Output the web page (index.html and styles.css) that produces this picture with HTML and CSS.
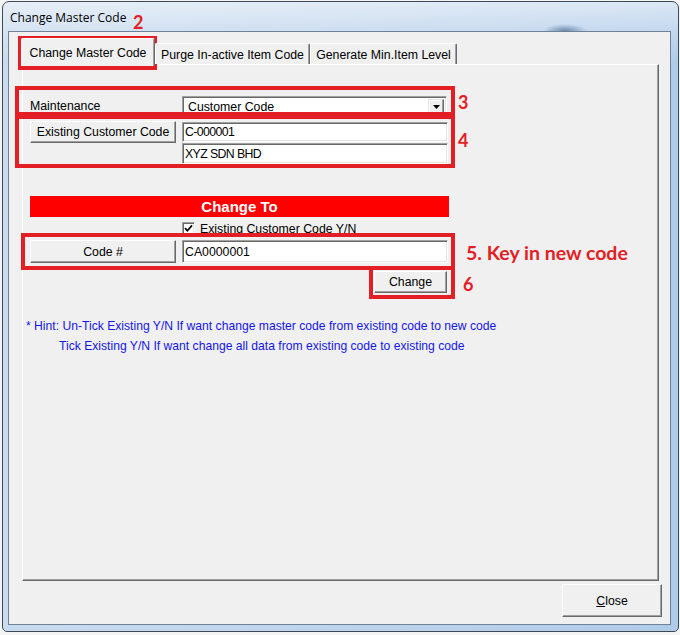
FILE: index.html
```html
<!DOCTYPE html>
<html>
<head>
<meta charset="utf-8">
<title>Change Master Code</title>
<link rel="stylesheet" href="styles.css">
</head>
<body>
<div class="window">
  <div class="titlebar"><span class="title">Change Master Code</span></div>
  <div class="client">
    <div class="tabs">
      <div class="tab tab-active">Change Master Code</div>
      <div class="tab tab-purge">Purge In-active Item Code</div>
      <div class="tab tab-gen">Generate Min.Item Level</div>
    </div>
    <div class="panel">
      <div class="form">
        <div class="lbl">Maintenance</div>
        <div class="combo">
          <span class="combo-text">Customer Code</span>
          <span class="drop"><svg width="7" height="4" viewBox="0 0 7 4"><path d="M0 0H7L3.5 4Z" fill="#000"/></svg></span>
        </div>
        <button class="btn btn-existing">Existing Customer Code</button>
        <div class="field narrow field-code">C-000001</div>
        <div class="field narrow field-name">XYZ SDN BHD</div>
      </div>
      <div class="bar">Change To</div>
      <div class="checkrow">
        <span class="check"><svg width="9" height="9" viewBox="0 0 9 9"><path d="M1 4.2L3.4 6.8L8 1.4" fill="none" stroke="#000" stroke-width="1.7"/></svg></span>
        <span class="check-label">Existing Customer Code Y/N</span>
      </div>
      <div class="coderow">
        <button class="btn btn-code">Code #</button>
        <div class="field field-new">CA0000001</div>
      </div>
      <div class="changerow"><button class="btn btn-change">Change</button></div>
      <div class="hint">
        <div class="hint-1">* Hint: Un-Tick Existing Y/N If want change master code from existing code to new code</div>
        <div class="hint-2">Tick Existing Y/N If want change all data from existing code to existing code</div>
      </div>
    </div>
    <div class="footer"><button class="btn btn-close"><u>C</u>lose</button></div>
  </div>
</div>
<div class="annot">
  <div class="rbox rbox-2"></div>
  <div class="rbox rbox-3"></div>
  <div class="rbox rbox-4"></div>
  <div class="rbox rbox-5"></div>
  <div class="rbox rbox-6"></div>
  <div class="rlabel rl-2">2</div>
  <div class="rlabel rl-3">3</div>
  <div class="rlabel rl-4">4</div>
  <div class="rlabel rl-5">5. Key in new code</div>
  <div class="rlabel rl-6">6</div>
</div>
</body>
</html>
```
FILE: styles.css
```css
html, body {
  margin: 0;
  padding: 0;
}
body {
  width: 680px;
  height: 635px;
  overflow: hidden;
  position: relative;
  background: #f4f4f4;
  font-family: "Liberation Sans", Arial, sans-serif;
  font-size: 12.3px;
  color: #000;
}
.window {
  box-sizing: border-box;
  margin: 1px 0 0 2px;
  width: 677px;
  height: 631px;
  border: 1px solid #3f4a57;
  border-radius: 7px 7px 5px 5px;
  padding: 0 7px 6px 5px;
  display: flex;
  flex-direction: column;
  background:
    radial-gradient(ellipse 22px 7px at 562px 29px, rgba(30, 70, 115, 0.55), rgba(30, 70, 115, 0)),
    linear-gradient(to bottom, rgba(255, 255, 255, 0.55) 0, rgba(255, 255, 255, 0.25) 28px, rgba(255, 255, 255, 0) 60px),
    linear-gradient(to right, #c9dbef 0%, #bcd3ec 60%, #b0cbe9 100%);
}
.titlebar {
  height: 29px;
  display: flex;
  align-items: center;
  padding-left: 2px;
  padding-top: 2px;
  box-sizing: border-box;
}
.title {
  font-family: "Open Sans", "Noto Sans", sans-serif;
  font-size: 12px;
  color: #000;
}
.client {
  box-sizing: border-box;
  height: 594px;
  border: 1px solid #6f8196;
  background: #f0f0f0;
  display: flex;
  flex-direction: column;
}
.tabs {
  display: flex;
  align-items: flex-end;
  height: 26px;
  margin-top: 6px;
  padding-left: 12px;
  position: relative;
  z-index: 1;
}
.tab {
  box-sizing: border-box;
  height: 21px;
  display: flex;
  align-items: center;
  justify-content: center;
  padding-top: 1px;
  border-top: 1px solid #fff;
  border-left: 1px solid #fff;
  border-right: 1px solid #696969;
  box-shadow: inset -1px 0 0 #a0a0a0;
  border-radius: 2px 2px 0 0;
  background: #f0f0f0;
  white-space: nowrap;
}
.tab-active {
  width: 134px;
  height: 28px;
  margin-bottom: -2px;
  padding-top: 0;
}
.tab-purge {
  width: 155px;
}
.tab-gen {
  width: 147px;
}
.panel {
  box-sizing: border-box;
  margin-left: 13px;
  width: 637px;
  height: 517px;
  border: 1px solid;
  border-color: #fff #696969 #696969 #fff;
  box-shadow: inset -1px -1px 0 #a0a0a0;
  display: flex;
  flex-direction: column;
}
.form {
  margin: 31px 0 0 7px;
  display: grid;
  grid-template-columns: 146px 266px;
  grid-template-rows: 21px 26px 21px;
  column-gap: 6px;
}
.lbl {
  display: flex;
  align-items: center;
  padding-bottom: 2px;
}
.combo {
  box-sizing: border-box;
  width: 265px;
  height: 21px;
  background: #fff;
  border: 1px solid;
  border-color: #a0a0a0 #fff #fff #a0a0a0;
  box-shadow: inset 1px 1px 0 #696969, inset -1px -1px 0 #e3e3e3;
  display: flex;
  align-items: center;
  justify-content: space-between;
  padding: 0 2px 0 5px;
}
.drop {
  box-sizing: border-box;
  width: 16px;
  height: 15px;
  background: #f0f0f0;
  border: 1px solid;
  border-color: #e3e3e3 #696969 #696969 #e3e3e3;
  box-shadow: inset -1px -1px 0 #a0a0a0, inset 1px 1px 0 #fff;
  display: flex;
  align-items: center;
  justify-content: center;
}
.btn {
  box-sizing: border-box;
  margin: 0;
  padding: 0;
  font: inherit;
  color: #000;
  background: #f0f0f0;
  border: 1px solid;
  border-color: #fff #696969 #696969 #fff;
  box-shadow: inset -1px -1px 0 #a0a0a0;
  display: flex;
  align-items: center;
  justify-content: center;
  white-space: nowrap;
}
.btn-existing {
  grid-row: 2;
  grid-column: 1;
  margin-top: 4px;
  height: 22px;
}
.field {
  box-sizing: border-box;
  background: #fff;
  border: 1px solid;
  border-color: #a0a0a0 #fff #fff #a0a0a0;
  box-shadow: inset 1px 1px 0 #696969, inset -1px -1px 0 #e3e3e3;
  display: flex;
  align-items: center;
  padding: 0 2px;
  white-space: nowrap;
}
.narrow {
  letter-spacing: -0.6px;
}
.field-code {
  grid-row: 2;
  grid-column: 2;
  margin-top: 5px;
  height: 20px;
  align-items: flex-start;
  padding-top: 2px;
}
.field-name {
  grid-row: 3;
  grid-column: 2;
  height: 21px;
}
.bar {
  margin: 32px 0 0 7px;
  width: 419px;
  height: 21px;
  background: #ff0000;
  color: #fff;
  font-weight: bold;
  font-size: 15px;
  display: flex;
  align-items: center;
  justify-content: center;
}
.checkrow {
  margin: 5px 0 0 159px;
  height: 13px;
  display: flex;
  align-items: center;
  gap: 5px;
}
.check {
  box-sizing: border-box;
  width: 13px;
  height: 13px;
  background: #fff;
  border: 1px solid;
  border-color: #a0a0a0 #fff #fff #a0a0a0;
  box-shadow: inset 1px 1px 0 #696969, inset -1px -1px 0 #e3e3e3;
  display: flex;
  align-items: center;
  justify-content: center;
}
.coderow {
  margin: 5px 0 0 7px;
  display: flex;
  gap: 6px;
  height: 23px;
}
.btn-code {
  width: 146px;
  height: 23px;
}
.field-new {
  width: 266px;
  height: 23px;
}
.changerow {
  margin: 8px 0 0 7px;
  width: 417px;
  display: flex;
  justify-content: flex-end;
}
.btn-change {
  width: 73px;
  height: 22px;
}
.hint {
  margin: 23px 0 0 3px;
  color: #1515e6;
  line-height: 20px;
  font-size: 12.15px;
  white-space: nowrap;
}
.hint-2 {
  padding-left: 33px;
}
.footer {
  display: flex;
  justify-content: flex-end;
  padding: 3px 8px 0 0;
}
.btn-close {
  width: 100px;
  height: 33px;
}
.annot {
  position: absolute;
  left: 0;
  top: 0;
  width: 680px;
  height: 635px;
  pointer-events: none;
}
.rbox {
  position: absolute;
  box-sizing: border-box;
  border: 4px solid #e31e24;
}
.rbox-2 { left: 18px; top: 36px; width: 139px; height: 34px; }
.rbox-3 { left: 15px; top: 86px; width: 440px; height: 30px; }
.rbox-4 { left: 15px; top: 115px; width: 440px; height: 53px; }
.rbox-5 { left: 21px; top: 233px; width: 434px; height: 37px; }
.rbox-6 { left: 369px; top: 266px; width: 86px; height: 33px; }
.rlabel {
  position: absolute;
  font-family: Lato, "Open Sans", sans-serif;
  font-weight: bold;
  color: #e31e24;
  font-size: 18px;
  line-height: 1;
  white-space: nowrap;
}
.rl-2 { left: 133px; top: 13px; }
.rl-3 { left: 458px; top: 93px; }
.rl-4 { left: 458px; top: 131px; }
.rl-5 { left: 466px; top: 243px; font-size: 19.5px; }
.rl-6 { left: 463px; top: 275px; }
```
